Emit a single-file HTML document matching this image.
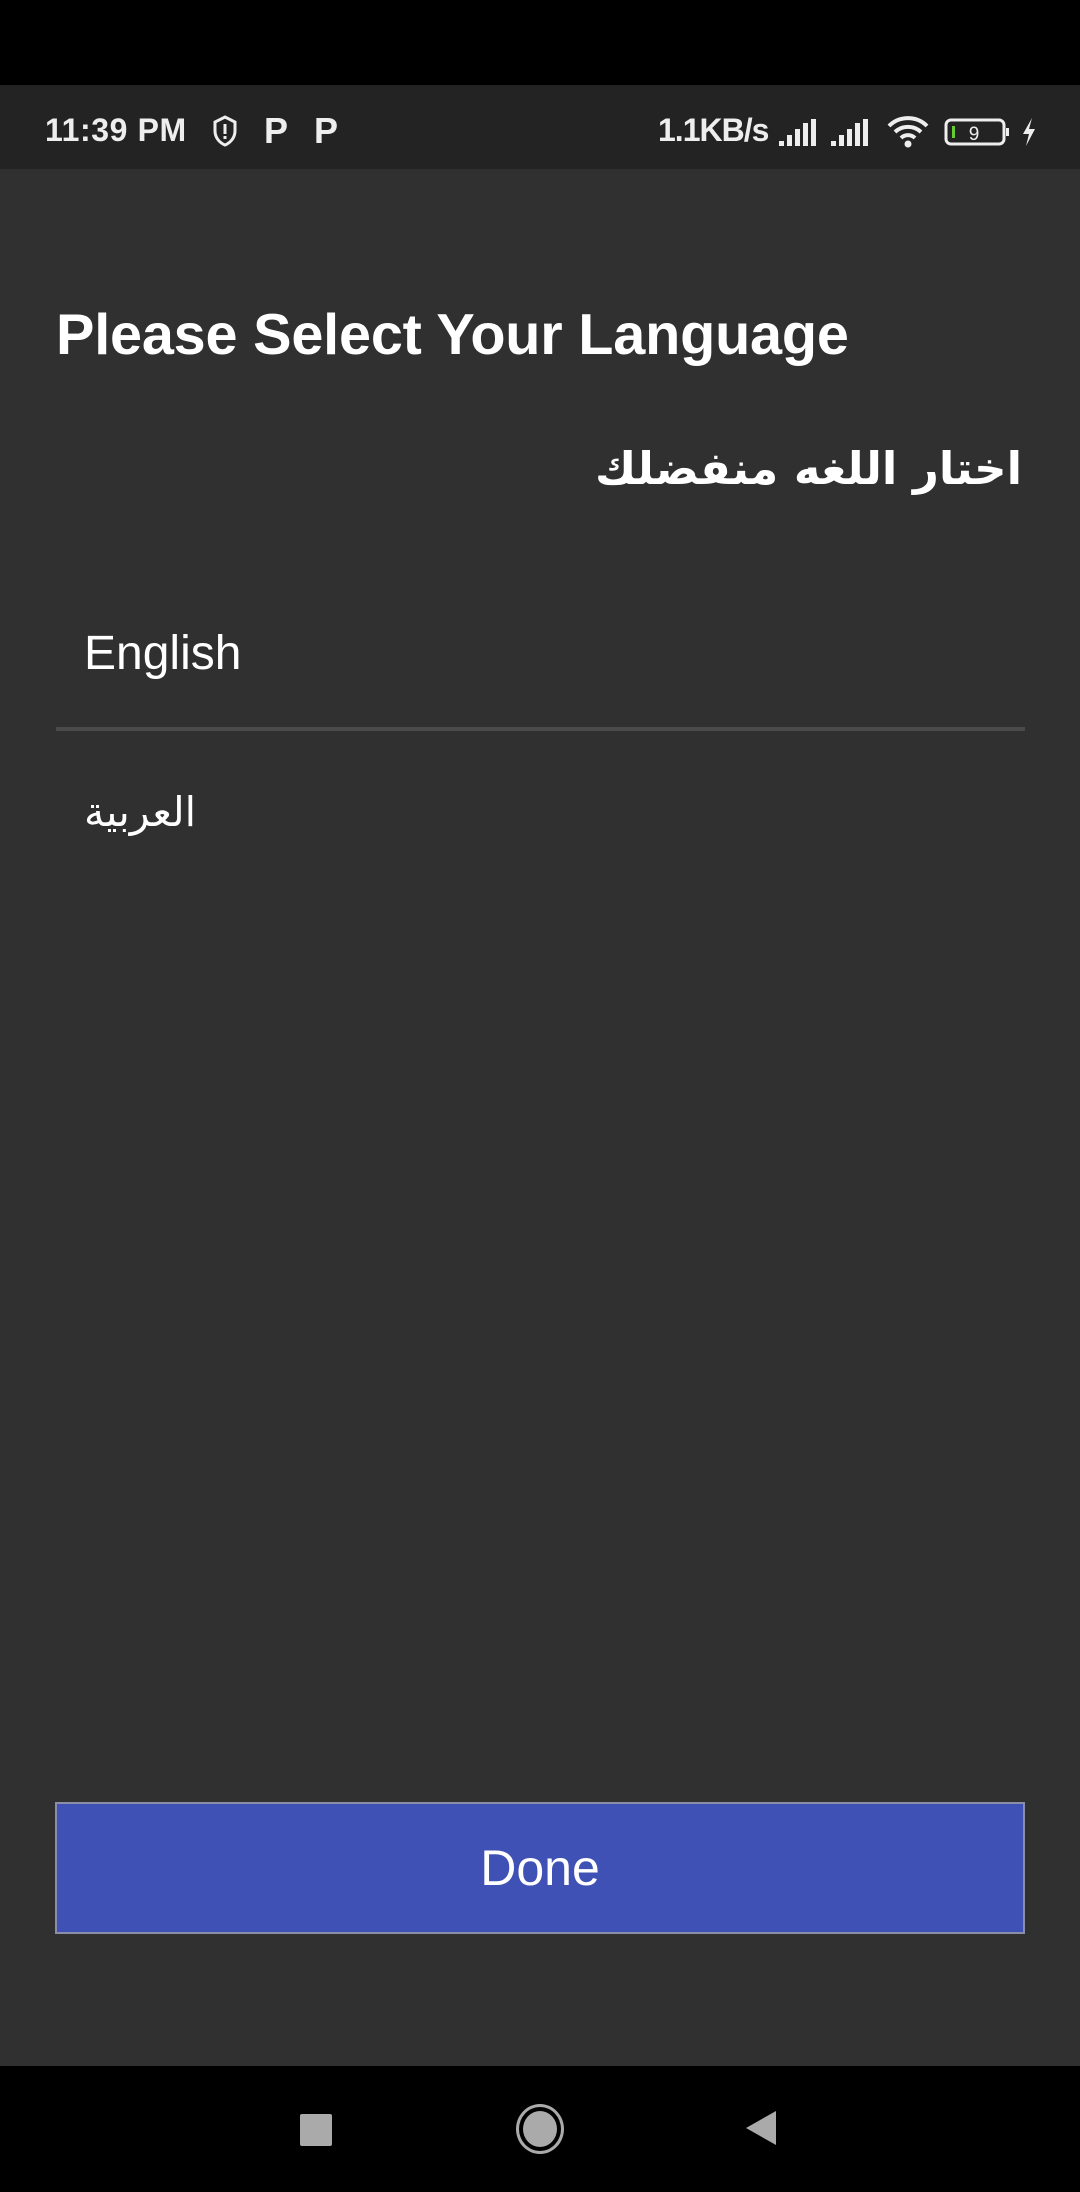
<!DOCTYPE html>
<html><head><meta charset="utf-8"><style>
*{margin:0;padding:0;box-sizing:border-box}
body{width:1080px;height:2192px;background:#303030;position:relative;overflow:hidden;font-family:"Liberation Sans","DejaVu Sans",sans-serif;color:#fff}
.top{position:absolute;left:0;top:0;width:1080px;height:85px;background:#000}
.sb{position:absolute;left:0;top:85px;width:1080px;height:84px;background:#232323;color:#eee;font-weight:bold;font-size:32px}
.nav{position:absolute;left:0;top:2066px;width:1080px;height:126px;background:#000}
.abs{position:absolute}
</style></head><body>
<div class="top"></div>
<div class="sb">
<div class="abs" style="left:45px;top:27px;letter-spacing:0.6px">11:39 PM</div>
<svg class="abs" style="left:212px;top:30px" width="26" height="32" viewBox="0 0 26 32"><path d="M13 2 L23 7 V16 C23 23 18 28 13 30 C8 28 3 23 3 16 V7 Z" fill="none" stroke="#eee" stroke-width="3"/><rect x="11.5" y="9" width="3" height="10" fill="#eee"/><rect x="11.5" y="21" width="3" height="3" fill="#eee"/></svg>
<div class="abs" style="left:264px;top:25px;font-size:36px;font-weight:900">P</div>
<div class="abs" style="left:314px;top:25px;font-size:36px;font-weight:900">P</div>
<div class="abs" style="left:658px;top:27px;letter-spacing:-1px">1.1KB/s</div>
<svg class="abs" style="left:778px;top:34px" width="40" height="28"><rect x="1" y="22" width="5" height="5" fill="#eee"/><rect x="9" y="16" width="5" height="11" fill="#eee"/><rect x="17" y="10" width="5" height="17" fill="#eee"/><rect x="25" y="4" width="5" height="23" fill="#eee"/><rect x="33" y="0" width="5" height="27" fill="#eee"/></svg>
<svg class="abs" style="left:830px;top:34px" width="40" height="28"><rect x="1" y="22" width="5" height="5" fill="#eee"/><rect x="9" y="16" width="5" height="11" fill="#eee"/><rect x="17" y="10" width="5" height="17" fill="#eee"/><rect x="25" y="4" width="5" height="23" fill="#eee"/><rect x="33" y="0" width="5" height="27" fill="#eee"/></svg>
<svg class="abs" style="left:886px;top:30px" width="44" height="34" viewBox="0 0 44 34"><path d="M3 11 A27 27 0 0 1 41 11" fill="none" stroke="#eee" stroke-width="4"/><path d="M9 17 A19 19 0 0 1 35 17" fill="none" stroke="#eee" stroke-width="4"/><path d="M15 23 A10 10 0 0 1 29 23" fill="none" stroke="#eee" stroke-width="4"/><circle cx="22" cy="29" r="3.5" fill="#eee"/></svg>
<svg class="abs" style="left:944px;top:32px" width="72" height="30" viewBox="0 0 72 30"><rect x="2" y="3" width="58" height="24" rx="5" fill="none" stroke="#eee" stroke-width="3"/><rect x="8" y="9" width="3" height="12" fill="#6c3"/><text x="30" y="23" font-size="19" font-weight="normal" fill="#eee" font-family="Liberation Sans" text-anchor="middle">9</text><rect x="62" y="11" width="3" height="8" fill="#eee"/></svg>
<svg class="abs" style="left:1020px;top:32px" width="18" height="30" viewBox="0 0 18 30"><path d="M12 1 L3 17 H9 L6 29 L15 12 H9 Z" fill="#eee"/></svg>
</div>
<div class="abs" style="left:56px;top:302px;font-size:57.6px;font-weight:bold;letter-spacing:-0.2px">Please Select Your Language</div>
<div class="abs" dir="rtl" style="right:58px;top:442px;font-size:45px;font-weight:bold;font-family:'DejaVu Sans',sans-serif">اختار اللغه منفضلك</div>
<div class="abs" style="left:84px;top:626px;font-size:48px">English</div>
<div class="abs" style="left:56px;top:727px;width:969px;height:4px;background:#4a4a4a"></div>
<div class="abs" dir="rtl" style="left:84px;top:788px;font-size:41px;font-family:'DejaVu Sans',sans-serif">العربية</div>
<div class="abs" style="left:55px;top:1802px;width:970px;height:132px;background:#3f51b5;border:2px solid #8a8ea8;font-size:50px;text-align:center;line-height:128px">Done</div>
<div class="nav">
<div class="abs" style="left:300px;top:48px;width:32px;height:32px;background:#aaa;border-radius:2px"></div>
<div class="abs" style="left:516px;top:38px;width:48px;height:50px;border:3px solid #aaa;border-radius:50%"></div>
<div class="abs" style="left:523px;top:45px;width:34px;height:36px;background:#aaa;border-radius:50%"></div>
<svg class="abs" style="left:744px;top:44px" width="34" height="36"><path d="M32 1 V35 L2 18 Z" fill="#aaa"/></svg>
</div>
</body></html>
